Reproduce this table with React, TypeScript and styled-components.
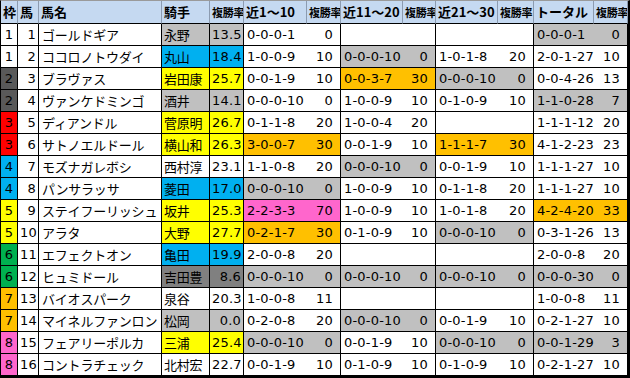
import React from "react";
import styled, { createGlobalStyle } from "styled-components";

const GlobalStyle = createGlobalStyle`
  body {
    margin: 0;
    background: #fff;
  }
`;

type Tone = "" | "g" | "d" | "o" | "p" | "b" | "y";

const tones: Record<string, string> = {
  "": "#ffffff",
  g: "#c0c0c0",
  d: "#808080",
  o: "#ffc000",
  p: "#ff66cc",
  b: "#00b0f0",
  y: "#ffff00",
};

const wakuColors: Record<number, string> = {
  1: "#ffffff",
  2: "#595959",
  3: "#ff0000",
  4: "#00b0f0",
  5: "#ffff00",
  6: "#00b050",
  7: "#ffc000",
  8: "#ff66cc",
};

type Rec = [string, string, Tone] | null;

type Horse = {
  waku: number;
  num: number;
  name: string;
  jockey: string;
  rate: string;
  tone: Tone;
  recs: Rec[];
};

const horses: Horse[] = [
  { waku: 1, num: 1, name: "ゴールドギア", jockey: "永野", rate: "13.5", tone: "g",
    recs: [["0-0-0-1", "0", ""], null, null, ["0-0-0-1", "0", "g"]] },
  { waku: 1, num: 2, name: "ココロノトウダイ", jockey: "丸山", rate: "18.4", tone: "b",
    recs: [["1-0-0-9", "10", ""], ["0-0-0-10", "0", "g"], ["1-0-1-8", "20", ""], ["2-0-1-27", "10", ""]] },
  { waku: 2, num: 3, name: "ブラヴァス", jockey: "岩田康", rate: "25.7", tone: "y",
    recs: [["0-0-1-9", "10", ""], ["0-0-3-7", "30", "o"], ["0-0-0-10", "0", "g"], ["0-0-4-26", "13", ""]] },
  { waku: 2, num: 4, name: "ヴァンケドミンゴ", jockey: "酒井", rate: "14.1", tone: "g",
    recs: [["0-0-0-10", "0", ""], ["1-0-0-9", "10", ""], ["0-1-0-9", "10", ""], ["1-1-0-28", "7", "g"]] },
  { waku: 3, num: 5, name: "ディアンドル", jockey: "菅原明", rate: "26.7", tone: "y",
    recs: [["0-1-1-8", "20", ""], ["1-0-0-4", "20", ""], null, ["1-1-1-12", "20", ""]] },
  { waku: 3, num: 6, name: "サトノエルドール", jockey: "横山和", rate: "26.3", tone: "y",
    recs: [["3-0-0-7", "30", "o"], ["0-0-1-9", "10", ""], ["1-1-1-7", "30", "o"], ["4-1-2-23", "23", ""]] },
  { waku: 4, num: 7, name: "モズナガレボシ", jockey: "西村淳", rate: "23.1", tone: "",
    recs: [["1-1-0-8", "20", ""], ["0-0-0-10", "0", "g"], ["0-0-1-9", "10", ""], ["1-1-1-27", "10", ""]] },
  { waku: 4, num: 8, name: "パンサラッサ", jockey: "菱田", rate: "17.0", tone: "b",
    recs: [["0-0-0-10", "0", "g"], ["1-0-0-9", "10", ""], ["0-1-1-8", "20", ""], ["1-1-1-27", "10", ""]] },
  { waku: 5, num: 9, name: "ステイフーリッシュ", jockey: "坂井", rate: "25.3", tone: "y",
    recs: [["2-2-3-3", "70", "p"], ["1-0-0-9", "10", ""], ["1-0-1-8", "20", ""], ["4-2-4-20", "33", "o"]] },
  { waku: 5, num: 10, name: "アラタ", jockey: "大野", rate: "27.7", tone: "y",
    recs: [["0-2-1-7", "30", "o"], ["0-1-0-9", "10", ""], ["0-0-0-10", "0", "g"], ["0-3-1-26", "13", ""]] },
  { waku: 6, num: 11, name: "エフェクトオン", jockey: "亀田", rate: "19.9", tone: "b",
    recs: [["2-0-0-8", "20", ""], null, null, ["2-0-0-8", "20", ""]] },
  { waku: 6, num: 12, name: "ヒュミドール", jockey: "吉田豊", rate: "8.6", tone: "d",
    recs: [["0-0-0-10", "0", "g"], ["0-0-0-10", "0", "g"], ["0-0-0-10", "0", "g"], ["0-0-0-30", "0", "g"]] },
  { waku: 7, num: 13, name: "バイオスパーク", jockey: "泉谷", rate: "20.3", tone: "",
    recs: [["1-0-0-8", "11", ""], null, null, ["1-0-0-8", "11", ""]] },
  { waku: 7, num: 14, name: "マイネルファンロン", jockey: "松岡", rate: "0.0", tone: "g",
    recs: [["0-2-0-8", "20", ""], ["0-0-0-10", "0", "g"], ["0-0-1-9", "10", ""], ["0-2-1-27", "10", ""]] },
  { waku: 8, num: 15, name: "フェアリーポルカ", jockey: "三浦", rate: "25.4", tone: "y",
    recs: [["0-0-0-10", "0", "g"], ["0-0-1-9", "10", ""], ["0-0-0-10", "0", "g"], ["0-0-1-29", "3", "g"]] },
  { waku: 8, num: 16, name: "コントラチェック", jockey: "北村宏", rate: "22.7", tone: "",
    recs: [["0-0-1-9", "10", ""], ["0-1-0-9", "10", ""], ["0-1-0-9", "10", ""], ["0-2-1-27", "10", ""]] },
];

const Sheet = styled.div`
  display: grid;
  grid-template-columns: 17px 21px 123px 48px 34px 63px 34px 62px 33px 62px 36px 60px 34px;
  grid-template-rows: 23px repeat(16, 22px);
  width: 630px;
  box-sizing: border-box;
  border-top: 1px solid #9a9a9a;
  border-left: 1px solid #000;
  border-right: 2px solid #000;
  border-bottom: 2px solid #000;
  font-family: "DejaVu Sans", "Noto Sans CJK JP", sans-serif;
  color: #000;
`;

const HeadCell = styled.div<{ $small?: boolean }>`
  box-sizing: border-box;
  background: #c5d9f1;
  border-right: 1px solid #8c9bb0;
  border-bottom: 1px solid #000;
  font-family: "Noto Sans CJK JP", "DejaVu Sans", sans-serif;
  font-weight: bold;
  font-size: ${(p) => (p.$small ? "11px" : "13px")};
  letter-spacing: ${(p) => (p.$small ? "-0.3px" : "0")};
  line-height: 22px;
  padding-left: 2px;
  white-space: nowrap;
  overflow: hidden;
`;

const Cell = styled.div<{ $bg: string; $align?: "left" | "right" | "center"; $open?: boolean }>`
  box-sizing: border-box;
  background: ${(p) => p.$bg};
  border-right: ${(p) => (p.$open ? "none" : "1px solid #000")};
  border-bottom: 1px solid #000;
  font-size: 13px;
  letter-spacing: 0.2px;
  line-height: 21px;
  text-align: ${(p) => p.$align || "left"};
  padding: 0 2px 0 2px;
  white-space: nowrap;
  overflow: hidden;
`;

const NameCell = styled(Cell)`
  font-family: "Noto Sans CJK JP", sans-serif;
  padding-left: 3px;
  letter-spacing: -0.2px;
`;

const JockeyCell = styled(NameCell)`
  padding-left: 2px;
`;

const RecCell = styled(Cell)`
  padding-left: 3px;
  padding-right: 0;
`;

const RateCell = styled(Cell)`
  padding-right: 7px;
`;

const headers: { label: string; small?: boolean }[] = [
  { label: "枠" },
  { label: "馬" },
  { label: "馬名" },
  { label: "騎手" },
  { label: "複勝率", small: true },
  { label: "近1～10" },
  { label: "複勝率", small: true },
  { label: "近11～20" },
  { label: "複勝率", small: true },
  { label: "近21～30" },
  { label: "複勝率", small: true },
  { label: "トータル" },
  { label: "複勝率", small: true },
];

const RecordPair: React.FC<{ rec: Rec }> = ({ rec }) => {
  const bg = tones[rec ? rec[2] : ""];
  return (
    <>
      <RecCell $bg={bg} $open>
        {rec ? rec[0] : ""}
      </RecCell>
      <RateCell $bg={bg} $align="right">
        {rec ? rec[1] : ""}
      </RateCell>
    </>
  );
};

const HorseRow: React.FC<{ horse: Horse }> = ({ horse }) => (
  <>
    <Cell $bg={wakuColors[horse.waku]} $align="center">
      {horse.waku}
    </Cell>
    <Cell $bg="#fff" $align="right">
      {horse.num}
    </Cell>
    <NameCell $bg="#fff">{horse.name}</NameCell>
    <JockeyCell $bg={tones[horse.tone]}>{horse.jockey}</JockeyCell>
    <Cell $bg={tones[horse.tone]} $align="right">
      {horse.rate}
    </Cell>
    {horse.recs.map((r, i) => (
      <RecordPair key={i} rec={r} />
    ))}
  </>
);

export default function App() {
  return (
    <>
      <GlobalStyle />
      <Sheet>
        {headers.map((h, i) => (
          <HeadCell key={i} $small={h.small}>
            {h.label}
          </HeadCell>
        ))}
        {horses.map((h) => (
          <HorseRow key={h.num} horse={h} />
        ))}
      </Sheet>
    </>
  );
}
